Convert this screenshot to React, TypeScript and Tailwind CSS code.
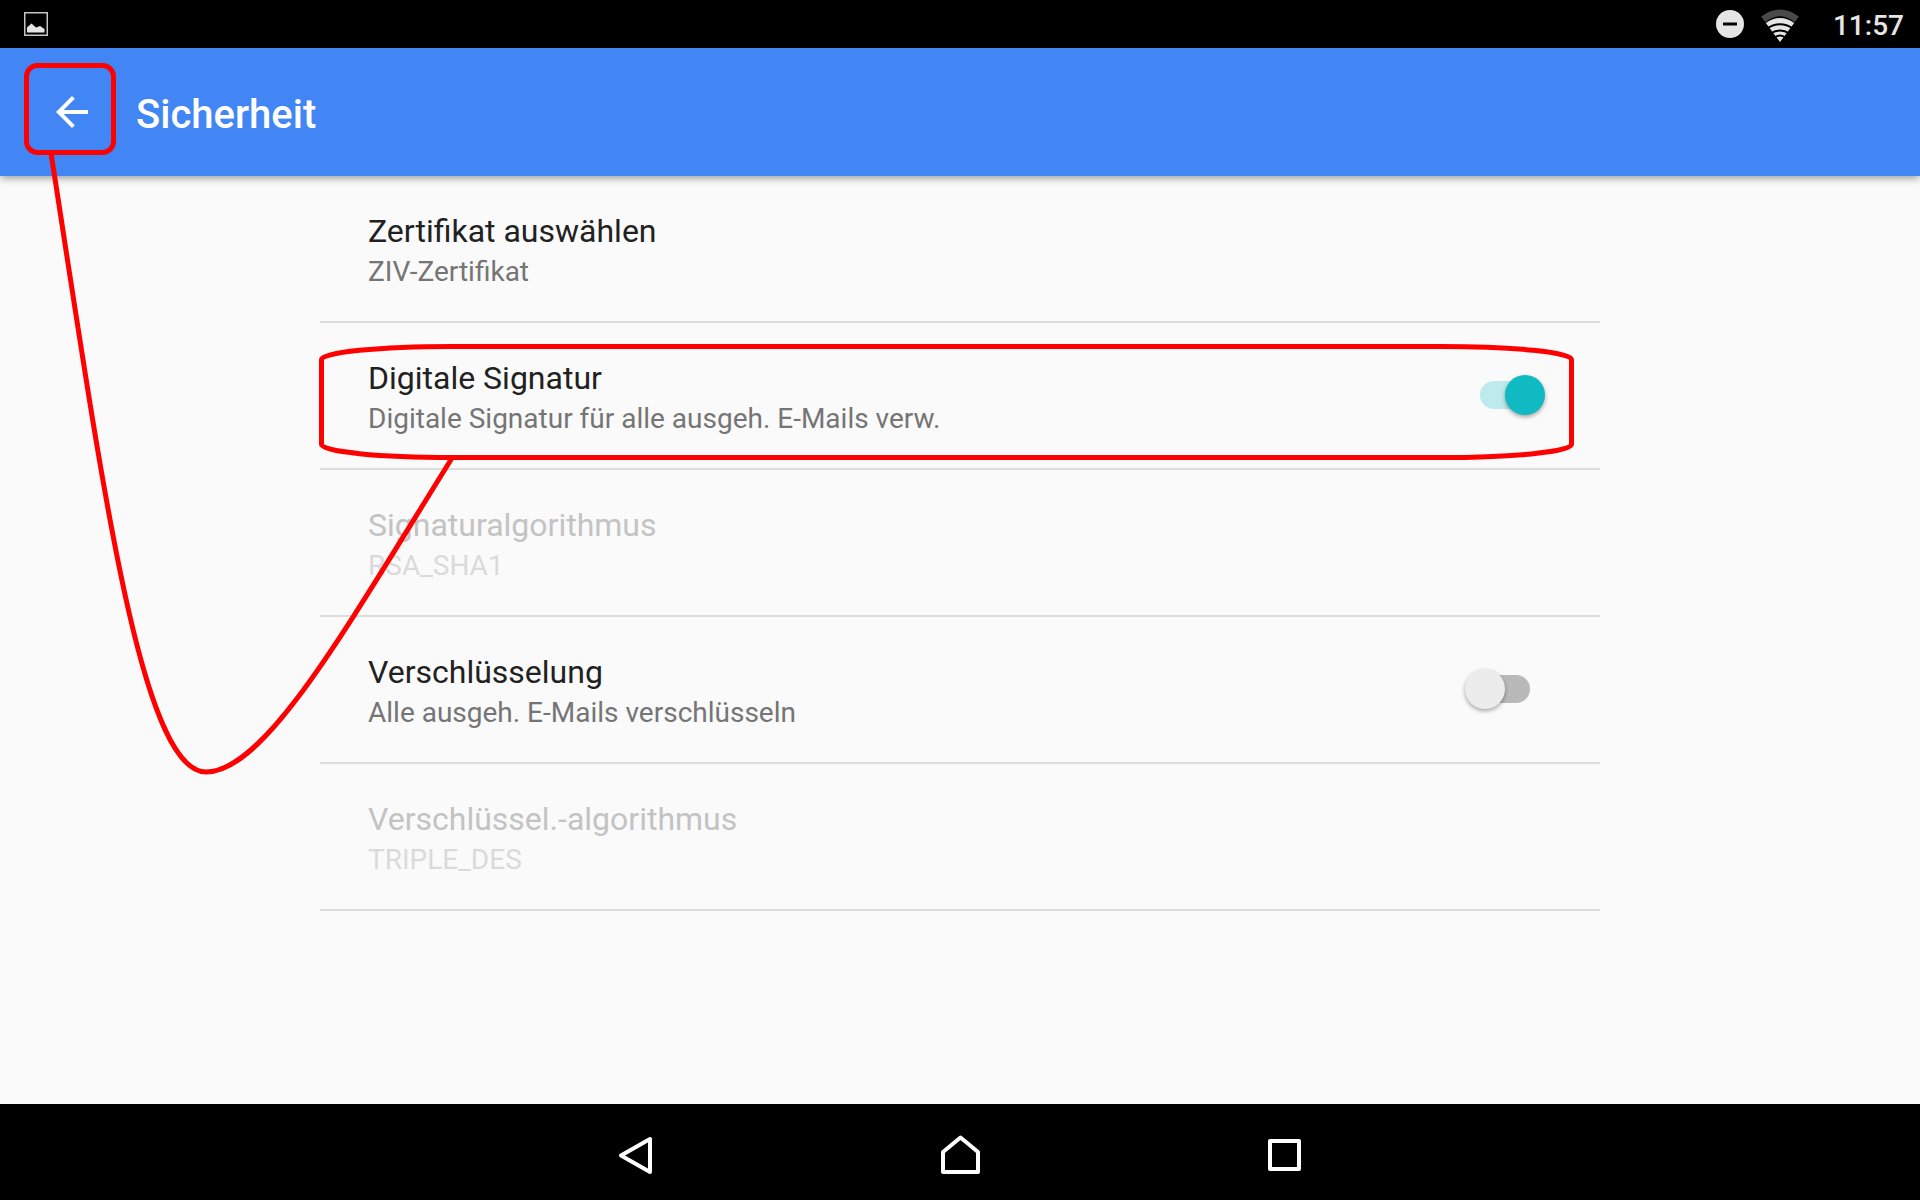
import { useState } from 'react';

type Row = {
  id: string;
  title: string;
  summary: string;
  disabled?: boolean;
  toggle?: boolean;
};

const rows: Row[] = [
  { id: 'certificate', title: 'Zertifikat auswählen', summary: 'ZIV-Zertifikat' },
  { id: 'signature', title: 'Digitale Signatur', summary: 'Digitale Signatur für alle ausgeh. E-Mails verw.', toggle: true },
  { id: 'signature-algorithm', title: 'Signaturalgorithmus', summary: 'RSA_SHA1', disabled: true },
  { id: 'encryption', title: 'Verschlüsselung', summary: 'Alle ausgeh. E-Mails verschlüsseln', toggle: true },
  { id: 'encryption-algorithm', title: 'Verschlüssel.-algorithmus', summary: 'TRIPLE_DES', disabled: true },
];

function StatusBar() {
  return (
    <div className="flex h-12 items-center justify-between bg-black pl-6 pr-4 text-[#e5e5e5]">
      <svg className="h-6 w-6" viewBox="0 0 24 24" fill="none">
        <rect x="0.75" y="0.75" width="22.5" height="22.5" stroke="#c4c4c4" strokeWidth="1.5" />
        <path d="M3 20V15.500L7.500 11.500L12 15.500L16 14L20.500 17V20.500H3Z" fill="#e5e5e5" />
      </svg>
      <div className="flex items-center">
        <svg className="mr-4 h-8 w-8" viewBox="0 0 32 32">
          <circle cx="17" cy="16" r="14" fill="#e5e5e5" />
          <path d="M10 16H24" stroke="#000" strokeWidth="3" />
        </svg>
        <svg className="mr-8 h-9 w-10" viewBox="1 0 40 36">
          <path d="M1 10.700Q20 -3.500 39 10.700L34.500 16Q20 4.500 5.500 16Z" fill="#4a4a4a" />
          <path d="M20 36L5.800 17Q20 7 34.200 17Z" fill="#e5e5e5" />
          <path d="M7 22.500Q20 14 33 22.500M10.500 27.500Q20 21.500 29.500 27.500M14 32Q20 27 26 32" fill="none" stroke="#000" strokeWidth="2" />
        </svg>
        <span className="pt-1 text-[28px] leading-8 font-medium">11:57</span>
      </div>
    </div>
  );
}

function AppBar() {
  return (
    <header className="relative flex h-32 items-center bg-[#4285f4] pl-12 text-white shadow-[0_2px_8px_rgba(0,0,0,0.4)]">
      <button type="button" aria-label="Zurück" className="mr-10 h-12 w-12">
        <svg className="h-12 w-12" viewBox="0 0 24 24" fill="currentColor">
          <path d="M20 11H7.830l5.590-5.590L12 4l-8 8 8 8 1.410-1.410L7.830 13H20v-2z" />
        </svg>
      </button>
      <h1 className="pt-1.5 text-[40px] leading-12 font-medium">Sicherheit</h1>
    </header>
  );
}

function Switch({ id, checked, onChange }: { id: string; checked: boolean; onChange: () => void }) {
  return (
    <input
      id={id}
      type="checkbox"
      role="switch"
      checked={checked}
      onChange={onChange}
      className="relative mb-0.5 h-7 w-[50px] shrink-0 cursor-pointer appearance-none rounded-full bg-[#b9b9b9] before:absolute before:-top-1.5 before:-left-[15px] before:h-10 before:w-10 before:rounded-full before:bg-[#ececec] before:shadow-[0_2px_4px_rgba(0,0,0,0.35)] checked:bg-[#bdebed] checked:before:left-[25px] checked:before:bg-[#0fbac3]"
    />
  );
}

function NavBar() {
  return (
    <nav className="flex h-24 items-center justify-center gap-[276px] bg-black text-white">
      <button type="button" aria-label="Zurück" className="h-12 w-12">
        <svg className="h-12 w-12" viewBox="0 0 48 48" fill="none" stroke="currentColor" strokeWidth="4" strokeLinejoin="round">
          <path d="M38 11V44L9 27.500Z" />
        </svg>
      </button>
      <button type="button" aria-label="Startbildschirm" className="h-12 w-12">
        <svg className="h-12 w-12" viewBox="0 0 48 48" fill="none" stroke="currentColor" strokeWidth="4" strokeLinejoin="round">
          <path d="M7 44V24L24.500 9.500L42 24V44Z" />
        </svg>
      </button>
      <button type="button" aria-label="Letzte Apps" className="h-12 w-12">
        <svg className="h-12 w-12" viewBox="0 0 48 48" fill="none" stroke="currentColor" strokeWidth="4" strokeLinejoin="round">
          <rect x="10" y="13" width="29" height="28" />
        </svg>
      </button>
    </nav>
  );
}

// red markers: signature row, back arrow and the line between them
function Annotations() {
  return (
    <svg className="pointer-events-none absolute top-0 left-0 h-[1200px] w-[1920px]" viewBox="0 0 1920 1200" fill="none" stroke="#ff0000" strokeWidth="5">
      <rect x="26.500" y="65.500" width="87" height="87" rx="11" />
      <rect x="321.500" y="346.500" width="1250" height="111" rx="130" ry="13" />
      <path d="M51 153C101 474 140 772 206 772C265 772 345 630 452 458" />
    </svg>
  );
}

export default function App() {
  const [enabled, setEnabled] = useState<Record<string, boolean>>({ signature: true, encryption: false });

  const toggle = (id: string) => setEnabled((prev) => ({ ...prev, [id]: !prev[id] }));

  return (
    <div className="relative flex min-h-screen flex-col overflow-hidden bg-[#fafafa] font-[Roboto,sans-serif]">
      <StatusBar />
      <AppBar />
      <main className="mx-auto w-2/3 flex-1">
        <ul>
          {rows.map((row) => (
            <li key={row.id} className="flex items-center justify-between border-b-2 border-[#dcdcdc] pr-[70px] pl-12">
              <label htmlFor={row.toggle ? row.id : undefined} className="block pt-[35px] pb-7">
                <span className={`block text-[32px] leading-10 ${row.disabled ? 'text-[#c3c3c3]' : 'text-[#212121]'}`}>{row.title}</span>
                <span className={`block text-[28px] leading-[42px] ${row.disabled ? 'text-[#dadada]' : 'text-[#757575]'}`}>{row.summary}</span>
              </label>
              {row.toggle && <Switch id={row.id} checked={enabled[row.id]} onChange={() => toggle(row.id)} />}
            </li>
          ))}
        </ul>
      </main>
      <NavBar />
      <Annotations />
    </div>
  );
}
